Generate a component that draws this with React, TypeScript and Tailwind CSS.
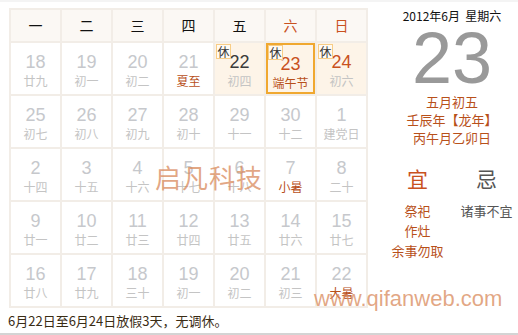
import React from 'react';

type Day = { n: number; l: string; term?: boolean; rest?: boolean; sel?: boolean; dark?: boolean; red?: boolean };

const weeks: Day[][] = [
  [
    { n: 18, l: '廿九' }, { n: 19, l: '初一' }, { n: 20, l: '初二' }, { n: 21, l: '夏至', term: true },
    { n: 22, l: '初四', rest: true, dark: true }, { n: 23, l: '端午节', term: true, rest: true, sel: true, red: true },
    { n: 24, l: '初六', rest: true, red: true },
  ],
  [
    { n: 25, l: '初七' }, { n: 26, l: '初八' }, { n: 27, l: '初九' }, { n: 28, l: '初十' },
    { n: 29, l: '十一' }, { n: 30, l: '十二' }, { n: 1, l: '建党日' },
  ],
  [
    { n: 2, l: '十四' }, { n: 3, l: '十五' }, { n: 4, l: '十六' }, { n: 5, l: '十七' },
    { n: 6, l: '十八' }, { n: 7, l: '小暑', term: true }, { n: 8, l: '二十' },
  ],
  [
    { n: 9, l: '廿一' }, { n: 10, l: '廿二' }, { n: 11, l: '廿三' }, { n: 12, l: '廿四' },
    { n: 13, l: '廿五' }, { n: 14, l: '廿六' }, { n: 15, l: '廿七' },
  ],
  [
    { n: 16, l: '廿八' }, { n: 17, l: '廿九' }, { n: 18, l: '三十' }, { n: 19, l: '初一' },
    { n: 20, l: '初二' }, { n: 21, l: '初三' }, { n: 22, l: '大暑', term: true },
  ],
];

const heads = ['一', '二', '三', '四', '五', '六', '日'];

function Cell({ d }: { d: Day }) {
  const num = d.red ? 'text-[#c9511e]' : d.dark ? 'text-[#3a3a3a]' : 'text-[#c6c8cc]';
  const lun = d.term ? 'text-[#b8501a]' : 'text-[#c4c4c4]';
  return (
    <div
      className={`relative flex h-[51px] flex-col items-center pt-[8px] ${d.rest ? 'bg-[#fdf4e8]' : 'bg-white'} ${d.sel ? 'border-2 border-[#f0a830] pt-[6px]' : ''}`}
    >
      {d.rest && (
        <span className={`absolute ${d.sel ? 'left-0 top-0' : 'left-[1px] top-[1px]'} flex h-[15px] w-[15px] items-center justify-center border border-[#f8cd86] bg-[#fffaf2] text-[12px] leading-none text-[#333]`}>
          休
        </span>
      )}
      <span className={`font-['Liberation_Sans',sans-serif] text-[18px] leading-[22px] ${num}`}>{d.n}</span>
      <span className={`text-[12px] leading-[16px] ${lun}`}>{d.l}</span>
    </div>
  );
}

export default function App() {
  return (
    <div className="relative h-[335px] w-[518px] overflow-hidden border-t-2 border-b-2 border-t-[#f4f4f4] border-b-[#d4d4d4] bg-white font-['Noto_Sans_CJK_SC',sans-serif]">
      <div className="flex pl-[9px] pt-[6px]">
        <div className="grid w-[359px] grid-cols-7 gap-[2px] bg-[#f2ede7] p-[2px]">
          {heads.map((h, i) => (
            <div
              key={h}
              className={`flex h-[31px] items-center justify-center bg-[#fbf8f4] text-[14px] ${i >= 5 ? 'text-[#c9511e]' : 'text-[#111]'}`}
            >
              {h}
            </div>
          ))}
          {weeks.flat().map((d, i) => (
            <Cell key={i} d={d} />
          ))}
        </div>

        <div className="flex w-[150px] flex-col items-center">
          <div className="ml-[18px] mt-[1px] text-[12px] leading-[14px] text-[#111]">2012年6月&nbsp;&nbsp;星期六</div>
          <div className="ml-[18px] mt-[-1px] font-['Liberation_Sans',sans-serif] text-[72px] leading-[72px] text-[#999]">23</div>
          <div className="ml-[18px] mt-[-1px] flex flex-col items-center text-[13px] leading-[18px] text-[#b8501a]">
            <span>五月初五</span>
            <span>壬辰年【龙年】</span>
            <span>丙午月乙卯日</span>
          </div>
          <div className="ml-[18px] mt-[18px] grid w-[138px] grid-cols-2">
            <div className="flex flex-col items-center">
              <span className="text-[21px] leading-[26px] text-[#c9511e]">宜</span>
              <div className="mt-[10px] flex flex-col items-center text-[13px] leading-[20px] text-[#b8501a]">
                <span>祭祀</span>
                <span>作灶</span>
                <span>余事勿取</span>
              </div>
            </div>
            <div className="flex flex-col items-center">
              <span className="text-[21px] leading-[26px] text-[#555]">忌</span>
              <div className="mt-[10px] flex flex-col items-center text-[13px] leading-[20px] text-[#555]">
                <span>诸事不宜</span>
              </div>
            </div>
          </div>
        </div>
      </div>

      <div className="pl-[8px] pt-[5px] text-[13px] leading-[16px] text-[#3a2c14]">6月22日至6月24日放假3天，无调休。</div>

      <div className="pointer-events-none absolute left-[155px] top-[158px] text-[26px] leading-[34px] tracking-[1px] text-[#d98a5c]/75">启凡科技</div>
      <div className="pointer-events-none absolute left-[314px] top-[284px] font-['Liberation_Sans',sans-serif] text-[22px] leading-[26px] text-[#d98a5c]/75">www.qifanweb.com</div>
    </div>
  );
}
